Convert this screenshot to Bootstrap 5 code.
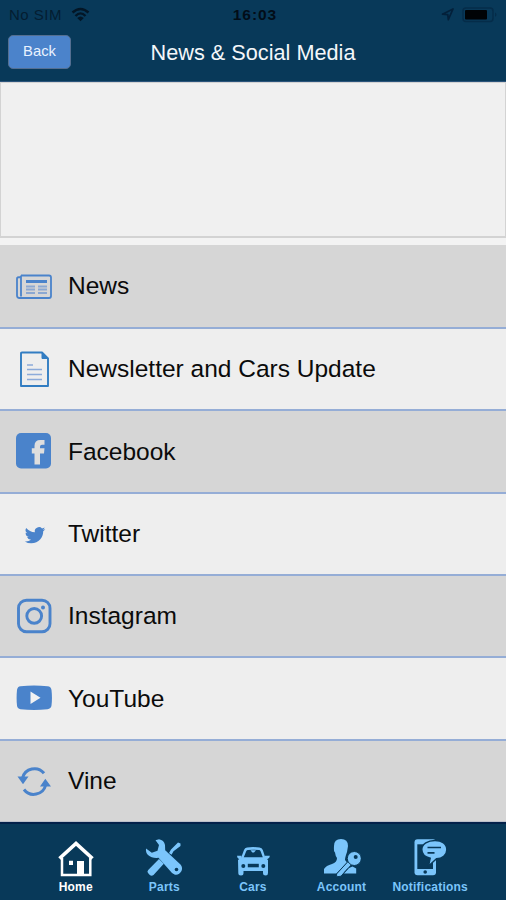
<!DOCTYPE html>
<html lang="en">
<head>
<meta charset="utf-8">
<meta name="viewport" content="width=device-width, initial-scale=1">
<title>News &amp; Social Media</title>
<link href="https://cdn.jsdelivr.net/npm/bootstrap@5.3.0/dist/css/bootstrap.min.css" rel="stylesheet">
<style>
body{font-family:"Liberation Sans",Arial,sans-serif;background:#f3f3f3;height:900px;overflow:hidden;line-height:1}
.top-area{background:#083959;height:82px;border-bottom:1px solid #2b547c}
.status-line{height:29px;padding:0 8px 0 9px;color:#041d31;font-size:15px;letter-spacing:.5px}
.status-line .clock{color:#020d18;font-weight:700;font-size:15.5px;letter-spacing:.95px;padding-left:3px}
.title-line{height:45px;padding:0 8px}
.btn-back{width:63px;height:34px;padding:0 0 1px;font-size:14.8px;line-height:1;color:#e9f2ff;background:#4b83cb;border:1.5px solid #546f91;border-radius:5px}
.page-title{font-size:21.7px;color:#f4f7fa}
.banner{height:156px;border:1px solid #d3d3d3;border-width:1px 1px 2px;background:#f0f0f0;margin-bottom:7px}
.feed-list{height:577px}
.feed-list > .feed-item{flex:1 1 0;padding:0 0 0 16px;border:0 solid #95add6;border-bottom-width:2px;background:#eee;color:#0b0b0b;font-size:24.5px}
.feed-list > .feed-item:nth-child(odd){background:#d6d6d6}
.feed-list > .feed-item:first-child{flex:0 0 84px}
.feed-list > .feed-item:last-child{border-bottom:1px solid #bcc0cb}
.feed-item svg{width:36px;height:36px;margin-right:16px;color:#4a83cb}
.feed-item span{padding-top:1px}
.tab-bar{height:78px;background:#083959;border-top:2px solid #03214a;padding:0 31.5px}
.tab-bar .nav-link{padding:14px 0 0;color:#7bc5fb;font-size:12px;font-weight:700;letter-spacing:.22px;white-space:nowrap;height:76px}
.tab-bar .nav-link.active{color:#fff}
.tab-bar svg{width:38px;height:40px;margin-bottom:3px}
.tab-bar .nav-item{width:20%}
</style>
</head>
<body class="d-flex flex-column">
<header class="top-area flex-shrink-0">
  <div class="status-line row g-0 align-items-center">
    <div class="col d-flex align-items-center"><span>No SIM</span>
      <svg class="ms-2" width="20" height="15" viewBox="-1 0 20 15" fill="none" stroke="#031626" stroke-width="2.4"><path d="M1.5 5.5Q9.5-1.7 17.5 5.5M4.5 9Q9.5 3.7 14.5 9"/><path d="M6.2 11Q9.5 7.8 12.8 11L9.5 14.2Z" fill="#031626" stroke="none"/></svg>
    </div>
    <div class="col-auto clock">16:03</div>
    <div class="col d-flex justify-content-end align-items-center">
      <svg class="me-2" width="13" height="13" viewBox="0 0 13 13" fill="none" stroke="#03203a" stroke-width="1.7" stroke-linejoin="round"><path d="M1.5 6.2 12 1 7.3 11.7 6.8 6.6Z"/></svg>
      <svg width="36" height="16" viewBox="0 0 36 16"><rect x="1" y="1" width="30" height="13.5" rx="3" fill="none" stroke="#052c49" stroke-width="1.5"/><rect x="3" y="3" width="22" height="9.5" rx="1" fill="#000306"/><path d="M33 5.5q3 2 0 4.5Z" fill="#052c49"/></svg>
    </div>
  </div>
  <div class="title-line row g-0 align-items-center">
    <div class="col"><button type="button" class="btn btn-back">Back</button></div>
    <h1 class="col-auto page-title mb-0 fw-normal pt-1">News &amp; Social Media</h1>
    <div class="col"></div>
  </div>
</header>
<main class="flex-shrink-0">
  <div class="banner"></div>
  <div class="list-group list-group-flush feed-list">
    <a href="#" class="list-group-item feed-item d-flex align-items-center">
      <svg viewBox="0 0 36 36" fill="none" stroke="currentColor" stroke-width="1.8"><path d="M5 7.5H33Q35 7.5 35 9.5V28Q35 30 33 30H3.5Q1 30 1 27.5V10.5Q1 9 5 9M5 7.5V28.5" stroke-linejoin="round"/><path d="M10 13.5H31" stroke-width="3"/><g stroke="#8ba8d2"><path d="M10 18.5H19M10 21.5H19M10 25H19M22 18.5H31M22 21.5H31M22 25H31" stroke-width="2.2"/></g></svg><span>News</span></a>
    <a href="#" class="list-group-item feed-item d-flex align-items-center">
      <svg viewBox="0 -1 36 36" fill="none" stroke="currentColor" stroke-width="1.9"><path d="M6 .5H26L32 6.5V34H5V1.5Q5 .5 6 .5Z" stroke="#327dc2" stroke-linejoin="round"/><path d="M26 .5V6.5H32Z" fill="#327dc2" stroke="#327dc2" stroke-width="1"/><path d="M11 13H17M11 17.5H26M11 22.5H26M11 27.5H26" stroke="#8cabda" stroke-width="1.6"/></svg><span>Newsletter and Cars Update</span></a>
    <a href="#" class="list-group-item feed-item d-flex align-items-center">
      <svg viewBox="0 0 36 36"><rect y="0" width="35" height="35.5" rx="5" fill="currentColor"/><path d="M18.5 31.5V20.5H15.8V15.3H18.5V12.8Q18.5 7 24.5 7H28.5V11.8H26Q24 11.8 24 13.8V15.3H28.5L28 20.5H24V31.5Z" fill="#dedede"/></svg><span>Facebook</span></a>
    <a href="#" class="list-group-item feed-item d-flex align-items-center">
      <svg viewBox="0 0 36 36"><path transform="translate(8.8 8.7) scale(1.28 1.24)" d="M5.03 15c6.04 0 9.34-5 9.34-9.33q0-.22-.01-.42A6.7 6.7 0 0 0 16 3.54a6.6 6.6 0 0 1-1.89.52 3.3 3.3 0 0 0 1.45-1.82 6.5 6.5 0 0 1-2.09.79A3.29 3.29 0 0 0 7.87 6.03 9.3 9.3 0 0 1 1.1 2.59a3.3 3.3 0 0 0 1.02 4.38A3.2 3.2 0 0 1 .64 6.56v.04a3.3 3.3 0 0 0 2.63 3.22 3.2 3.2 0 0 1-1.48.06 3.3 3.3 0 0 0 3.07 2.28A6.6 6.6 0 0 1 0 13.52 9.3 9.3 0 0 0 5.03 15" fill="currentColor"/></svg><span>Twitter</span></a>
    <a href="#" class="list-group-item feed-item d-flex align-items-center">
      <svg viewBox="0 0 36 36" fill="none" stroke="currentColor" stroke-width="2.9"><rect x="2.5" y="2.2" width="31.5" height="31.5" rx="8"/><circle cx="18.2" cy="17.9" r="7.4"/><circle cx="27" cy="9.4" r="2" fill="currentColor" stroke="none"/></svg><span>Instagram</span></a>
    <a href="#" class="list-group-item feed-item d-flex align-items-center">
      <svg viewBox="0 0 36 36"><path d="M4.5 6.2Q18 4.6 31.5 6.2 35 6.5 35.5 10 36.4 18 35.5 25.5 35 28.8 31.5 29.2 18 30.8 4.5 29.2 1.3 28.8 1 25.5 .2 18 1 10 1.5 6.5 4.5 6.2Z" fill="currentColor"/><path d="M14.5 11.5V24L24.5 17.8Z" fill="#f2f2f2"/></svg><span>YouTube</span></a>
    <a href="#" class="list-group-item feed-item d-flex align-items-center">
      <svg viewBox="0 0 36 36"><path d="M6.5 15A12.3 12.3 0 0 1 28 10.3M29.7 22A12.3 12.3 0 0 1 8 26.5" fill="none" stroke="currentColor" stroke-width="3"/><path d="M1.5 13.5H12.5L7 21.3ZM24 23.5H35L29.3 15.8Z" fill="currentColor"/></svg><span>Vine</span></a>
  </div>
</main>
<nav class="tab-bar flex-shrink-0">
  <ul class="nav flex-nowrap">
    <li class="nav-item"><a class="nav-link active d-flex flex-column align-items-center" href="#">
      <svg viewBox="0 0 38 40"><path d="M5 20V37H33.3V20" fill="none" stroke="currentColor" stroke-width="2.5"/><path d="M2.5 20.5 19 5.5 35.5 20.5" fill="none" stroke="currentColor" stroke-width="3.7"/><path d="M20 23H27V37H20ZM12 22.7H16V27H12Z" fill="currentColor"/></svg>Home</a></li>
    <li class="nav-item"><a class="nav-link d-flex flex-column align-items-center" href="#">
      <svg viewBox="0 0 38 40"><path d="M35.5 5.5 33 4.5 26 11.5 24 15 26.5 16.8 28.5 13.3 35.5 8ZM14 21 18.8 25.8 8.5 37Q6.5 38.5 4.8 37L3 35Q1.8 33.5 3.2 32Z" fill="currentColor"/><path d="M10.5 2.2 14 1.2Q19 2 20 7L20.2 12.2 35.5 26.5Q38 29.5 36.5 33 34 37.5 29.5 36.5L27 35 13.5 19.8Q7 20.5 3 17 .5 14.5 1 10.5L6.8 14.7 12.5 12.8 14 7Z" fill="currentColor"/><circle cx="31.5" cy="31.5" r="1.8" fill="#083959"/></svg>Parts</a></li>
    <li class="nav-item"><a class="nav-link d-flex flex-column align-items-center" href="#">
      <svg viewBox="0 0 38 40"><path d="M4 22 7.2 19.5 10 12Q10.8 9.6 13 9.5 19 8.6 25.5 9.5 28 9.6 28.8 12L31.3 19.5 34 22V35Q34 37.5 31.8 37.5 29 37.5 29 35V33H9.5V35Q9.5 37.5 7 37.5 4.3 37.5 4.3 35Z" fill="currentColor"/><path d="M9.8 19.2 12.2 13.2Q12.8 12 14 12 19 11.5 25 12 26 12 26.6 13.2L28.8 19.2Z" fill="#083959"/><path d="M16.5 12.3H22L20 14.5H18.3Z" fill="currentColor"/><path d="M3 17.7H7.5V21H5Q3 20 3 17.7ZM31 17.7H35.8Q36 20 33.5 21H31Z" fill="currentColor"/><g fill="#083959"><circle cx="9.3" cy="28" r="2"/><circle cx="29.3" cy="28" r="2"/><path d="M13.8 25.8H24.8V29.3H13.8Z"/></g></svg>Cars</a></li>
    <li class="nav-item"><a class="nav-link d-flex flex-column align-items-center" href="#">
      <svg viewBox="0 0 38 40"><path d="M11 8Q11 1 18 1T25 8L24 14Q22 19.5 22 22L24 24.5 13.5 35.5H1V31Q3 27.5 9 26 14 24.5 14 20 12.5 18.5 12 14.5 10.5 13.5 11 8Z" fill="currentColor"/><path d="M26 30 29.5 28.5 33.2 30.5V35.5H21Z" fill="currentColor"/><path d="M25 23.5 13.5 36 13.8 38.8 18 38.2 21.5 34.2 22.8 32.5 25 30.5 28.6 26.5Z" fill="currentColor" stroke="#083959" stroke-width="1"/><circle cx="31.3" cy="20.5" r="7" fill="currentColor" stroke="#083959" stroke-width="1"/><circle cx="32.7" cy="18.9" r="2" fill="#083959"/></svg>Account</a></li>
    <li class="nav-item"><a class="nav-link d-flex flex-column align-items-center" href="#">
      <svg viewBox="0 0 38 40"><rect x="3.5" y="1.3" width="21.5" height="36" rx="3" fill="currentColor"/><path d="M6.3 6.3H22V31H6.3Z" fill="#083959"/><circle cx="14.2" cy="34" r="1.8" fill="#083959"/><path d="M24 2.5C31 2.5 35.8 6 35.8 11.7S31 20.5 25.5 20.8L17.5 28 19.2 20.3Q10.8 18.2 10.8 11.5C10.8 6 17 2.5 24 2.5Z" fill="currentColor" stroke="#083959" stroke-width="1.4"/><path d="M16.5 9.5H30M16.5 14.8H23.5" stroke="#083959" stroke-width="1.7"/></svg>Notifications</a></li>
  </ul>
</nav>
<script src="https://cdn.jsdelivr.net/npm/bootstrap@5.3.0/dist/js/bootstrap.bundle.min.js"></script>
</body>
</html>
